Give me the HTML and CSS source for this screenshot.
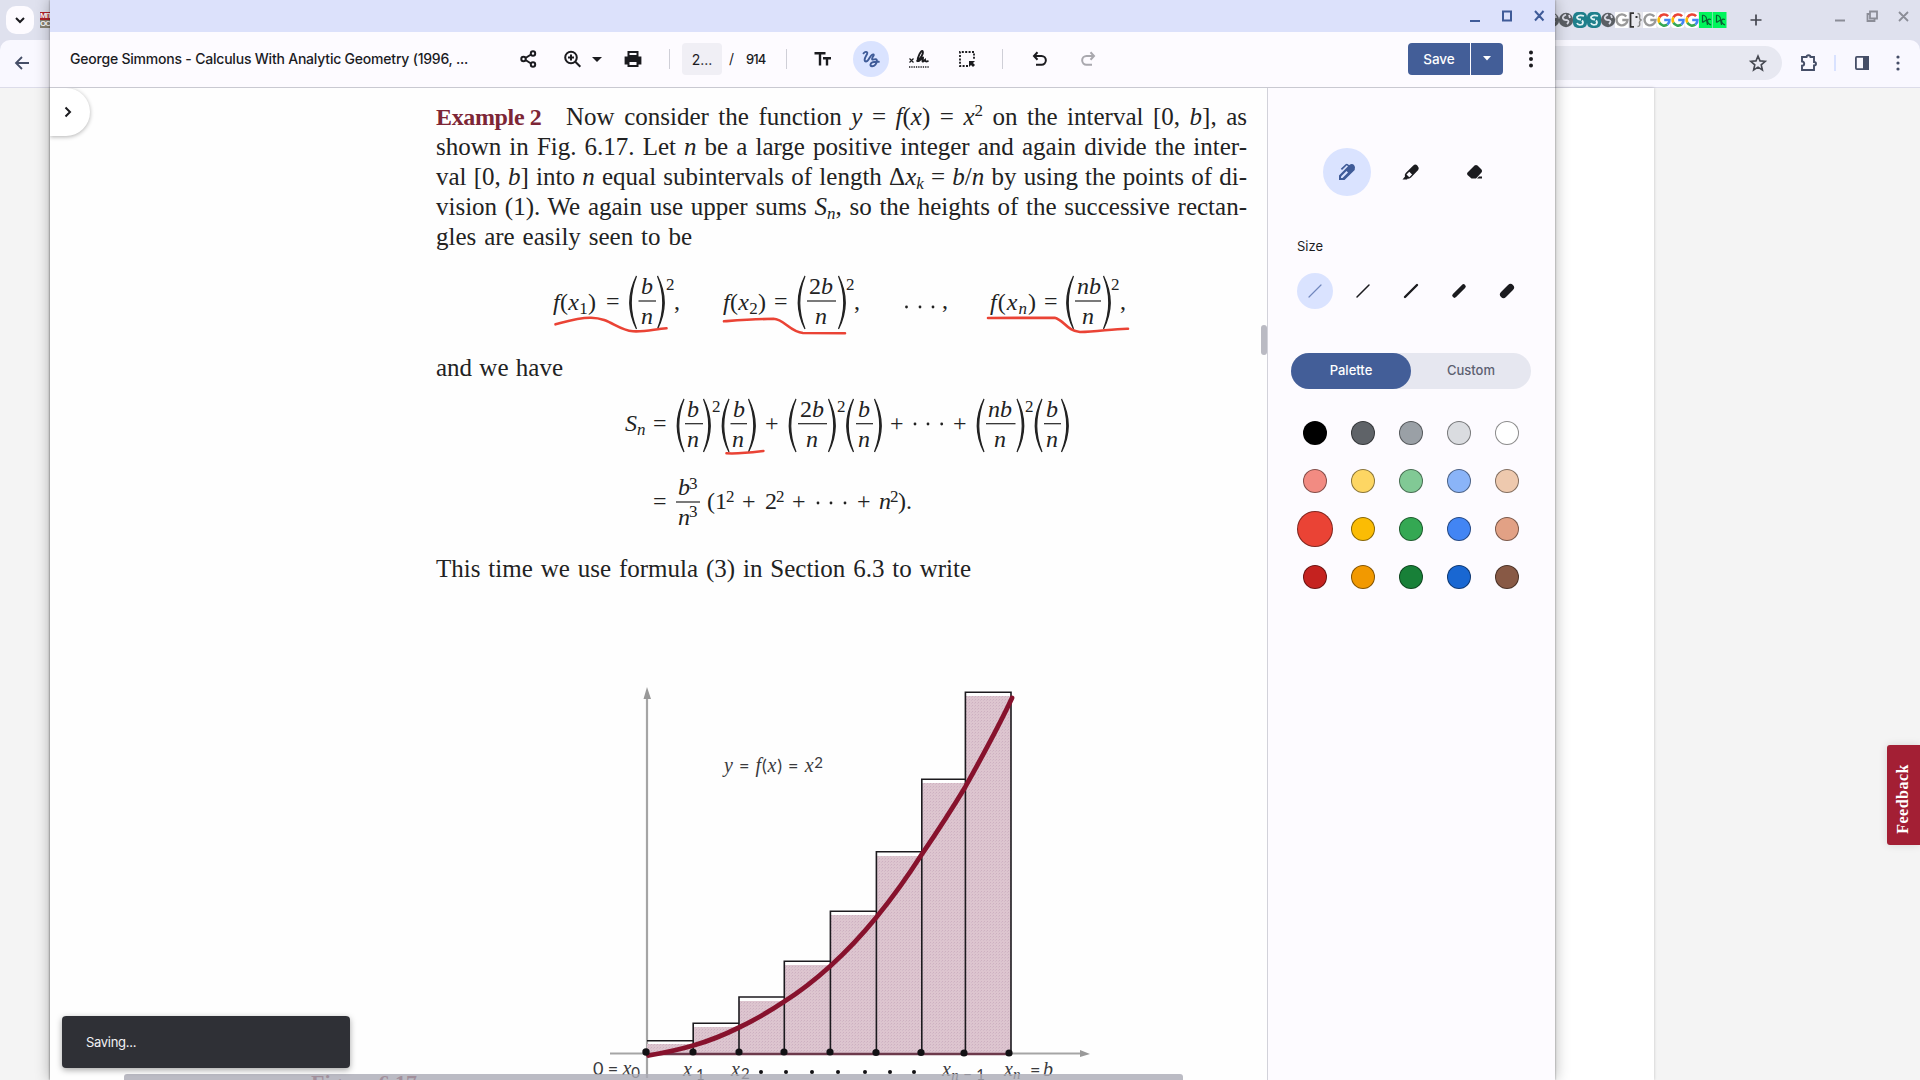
FILE: index.html
```html
<!DOCTYPE html>
<html lang="en">
<head>
<meta charset="utf-8">
<title>George Simmons - Calculus With Analytic Geometry</title>
<link rel="stylesheet" href="styles.css">
</head>
<body>
<div class="browser">
  <header class="tabstrip">
    <div class="tabsearch"><svg width="12" height="12" viewBox="0 0 12 12" fill="none" stroke="#1b1b1f" stroke-width="2"><path d="M2 4l4 4 4-4"/></svg></div>
    <div class="mit"><b>MIT</b><b>OCW</b></div>
    <svg class="favicons" width="176" height="16" viewBox="0 0 176 16">
      <defs>
        <g id="globe"><circle cx="7" cy="8" r="7.200" fill="#5b5f64"/><path d="M7 2.500q-4 2-3 4t4 1.500q3 1 0 4M10 3l1 3" fill="none" stroke="#d9dae4" stroke-width="1.800"/></g>
        <g id="teal"><rect width="14" height="16" rx="5" fill="#1f7f8b"/><path d="M11 4q-5-1.500-7 1 0 2.500 4 2.500M4 11q1 2.500 5 1.500 2-2 0-4" fill="none" stroke="#e1f3f4" stroke-width="1.800"/></g>
        <g id="greyg"><rect width="13.500" height="16" fill="#fff"/><path d="M11.300 4.400A5.500 5.500 0 1 0 12.500 8H7.300" fill="none" stroke="#999" stroke-width="2.400"/></g>
        <g id="g" fill="none" stroke-width="2.600"><rect width="13.500" height="16" rx="3" fill="#fff"/><path d="M11.100 4.200A5.400 5.400 0 0 0 2.400 5.300" stroke="#ea4335"/><path d="M2.400 5.300a5.400 5.400 0 0 0 0 5.400" stroke="#fbbc05"/><path d="M2.400 10.700a5.400 5.400 0 0 0 8 1.800" stroke="#34a853"/><path d="M10.400 12.500A5.400 5.400 0 0 0 12.400 8H7.200" stroke="#4285f4"/></g>
        <g id="green"><rect width="13.500" height="16" fill="#00f55b"/><path d="M3.500 3v7.500M3.500 3Q8 4 7.500 8L3.500 10.500M7.500 8l1 5M12 7.500q-3.500-1-3.500 1.500t3.500 4" fill="none" stroke="#0b5c33" stroke-width="1.200"/></g>
      </defs>
      <use href="#globe" x="-6"/><use href="#globe" x="8"/><use href="#teal" x="22"/><use href="#teal" x="36"/><use href="#globe" x="50"/><use href="#greyg" x="64"/>
      <rect x="78" width="13.500" height="16" fill="#e9e9ee"/><path d="M83 1.200h-3.500v13.600h3.500" fill="none" stroke="#333" stroke-width="1.800"/><rect x="84.500" y="4" width="2" height="2" fill="#333"/><path d="M86.500 1.500q3 0 2 4 0 2 2 2.500-2 .5-2 2.500 1 4-2 4" fill="none" stroke="#888" stroke-width="1.500"/>
      <use href="#greyg" x="92"/><use href="#g" x="106"/><use href="#g" x="120"/><use href="#g" x="134"/><use href="#green" x="148"/><use href="#green" x="162"/>
    </svg>
    <svg class="newtab" width="12" height="12" viewBox="0 0 12 12" stroke="#44464f" stroke-width="1.700"><path d="M6 .5v11M.5 6h11"/></svg>
    <svg class="bgcontrols" width="76" height="14" viewBox="0 0 76 14" fill="none" stroke="#8b8d97" stroke-width="1.800"><path d="M0 11.500h10M35 2.500h7v7h-7zM35 5h-2.500v7h7V9.500M64 3l9 9M73 3l-9 9"/></svg>
  </header>
  <div class="navbar">
    <svg class="back" width="16" height="16" viewBox="0 0 16 16" fill="none" stroke="#454e67" stroke-width="1.800"><path d="M15 8H3M8 2L2 8l6 6"/></svg>
    <div class="omnibox"><svg width="18" height="18" viewBox="0 0 18 18" fill="none" stroke="#454851" stroke-width="1.600"><path d="M9 2l2 4.900 5.200.4-4 3.500 1.200 5.200L9 13.200 4.600 16l1.200-5.200-4-3.500L7 6.900z"/></svg></div>
    <svg class="puzzle" width="18" height="18" viewBox="0 0 18 18" fill="none" stroke="#454e67" stroke-width="1.900"><path d="M2 3h4.500q0-1.800 2-1.800t2 1.800H14v5q2 0 2 1.700T14 11.400V16H2v-4.300q2.200 0 2.200-2T2 7.500z"/></svg>
    <i class="navline"></i>
    <svg class="sidepanel" width="16" height="16" viewBox="0 0 16 16"><rect x="1.900" y="1.900" width="12.200" height="12.200" rx="1" fill="none" stroke="#454e67" stroke-width="1.800"/><path d="M9 1h6v14H9z" fill="#454e67"/></svg>
    <svg class="navmore" width="4" height="16" viewBox="0 0 4 16" fill="#454e67"><circle cx="2" cy="2" r="1.600"/><circle cx="2" cy="8" r="1.600"/><circle cx="2" cy="14" r="1.600"/></svg>
  </div>
  <div class="site"><div class="sitepage"></div><div class="feedback"><span>Feedback</span></div></div>
</div>

<main class="window">
  <div class="titlebar">
    <svg width="76" height="14" viewBox="0 0 76 14" fill="none" stroke="#3f5b98" stroke-width="2"><path d="M0 12h10M33 2.500h8v9h-8zM65 2l8.500 9.500M73.500 2L65 11.500"/></svg>
  </div>
  <div class="toolbar">
    <div class="name">George Simmons - Calculus With Analytic Geometry (1996, ...</div>
    <svg class="tools" width="140" height="36" viewBox="510 41 140 36" fill="none" stroke="#1b1b1f" stroke-width="2">
      <circle cx="533" cy="53.500" r="2.200"/><circle cx="533" cy="64.500" r="2.200"/><circle cx="523.500" cy="59" r="2.200"/><path d="M525.500 58l5.500-3.500M525.500 60l5.500 3.500"/>
      <circle cx="571" cy="57.500" r="5.800"/><path d="M575.300 61.800l5 5M568 57.500h6M571 54.500v6" /><path d="M592 57h10l-5 5z" fill="#1b1b1f" stroke="none"/>
      <rect x="628.500" y="52" width="9" height="4"/><path d="M625.600 57.500h14.800v6h-14.800z" fill="#1b1b1f"/><path d="M628.500 61h9v5h-9z" fill="#fdfbff"/>
    </svg>
    <i class="rule r1"></i>
    <div class="pageno">2...</div><div class="slash">/</div><div class="total">914</div>
    <i class="rule r2"></i>
    <svg class="text-tool" width="18" height="16" viewBox="0 0 18 16" fill="none" stroke="#1b1b1f" stroke-width="2.400"><path d="M.5 2.200h11M6 2v12.500M9 7.200h8M13 7v7.500"/></svg>
    <div class="draw"><svg width="18" height="18" viewBox="0 0 18 18" fill="none" stroke="#3f5b98" stroke-width="1.900" stroke-linecap="round"><path d="M1.500 3.300C3 1.800 5 1.300 5.300 2.800C5.600 4.500 2.300 7.500 2.600 10C2.900 12 5 12 6.600 9.500C8.200 7 9.500 4 11.300 4.400C13.200 5 9 8 10 9.300C11.500 10 14.700 8 14.900 10.500C15 13.500 12.500 16.300 10 16.200C7.800 16 8 13.300 10.300 12.300C12.500 11.400 14.500 11.600 16.800 11.800"/></svg></div>
    <svg class="sign" width="20" height="20" viewBox="0 0 20 20" fill="none" stroke="#1b1b1f"><path d="M.5 9.500l4 4M4.500 9.500l-4 4" stroke-width="1.200"/><path d="M7.500 12.500C12 9.500 15 4 13.500 2C12 .8 8.500 8.500 8.700 11.500C9.500 14 13 8 14 8.500C14.500 9.500 12.500 12.500 14 12.500L16 11C16 13 17.500 12.500 19.500 12" stroke-width="1.900"/><path d="M0 18h20" stroke-width="1.500" stroke-dasharray="1.300 1"/></svg>
    <svg class="marquee" width="16" height="16" viewBox="0 0 16 16" fill="none" stroke="#1b1b1f" stroke-width="1.800"><path d="M9 15H1V1h14v8" stroke-dasharray="2 1.400"/><path d="M10 10h6l-2 2 2 2-2 2-2-2-2 2z" fill="#1b1b1f" stroke="none"/></svg>
    <i class="rule r3"></i>
    <svg class="undo" width="16" height="16" viewBox="0 0 16 16" fill="none" stroke="#1b1b1f" stroke-width="2"><path d="M5.500 1.200L2 5l3.500 3.800M2 5h7.500a4.300 4.300 0 0 1 0 8.700H4"/></svg>
    <svg class="redo" width="16" height="16" viewBox="0 0 16 16" fill="none" stroke="#a9a8ae" stroke-width="2"><path d="M10.500 1.200L14 5l-3.500 3.800M14 5H6.500a4.300 4.300 0 0 0 0 8.700H12"/></svg>
    <div class="save">Save</div><div class="savemenu"><svg width="8" height="5" viewBox="0 0 8 5"><path d="M0 0h8L4 4.500z" fill="#fff"/></svg></div>
    <svg class="more" width="4" height="18" viewBox="0 0 4 18" fill="#1b1b1f"><circle cx="2" cy="2.500" r="2"/><circle cx="2" cy="9" r="2"/><circle cx="2" cy="15.500" r="2"/></svg>
  </div>
  <div class="body">
    <section class="viewer">
      <article class="page">
        <div class="ln"><b class="ex">Example 2</b>Now consider the function <i>y</i> = <i>f</i>(<i>x</i>) = <i>x</i><sup>2</sup> on the interval [0, <i>b</i>], as</div>
        <div class="ln">shown in Fig. 6.17. Let <i>n</i> be a large positive integer and again divide the inter-</div>
        <div class="ln">val [0, <i>b</i>] into <i>n</i> equal subintervals of length Δ<i>x<sub>k</sub></i> = <i>b</i>/<i>n</i> by using the points of di-</div>
        <div class="ln">vision (1). We again use upper sums <i>S<sub>n</sub></i>, so the heights of the successive rectan-</div>
        <div class="ln l5">gles are easily seen to be</div>
        <svg class="math" width="811" height="101" viewBox="436 251 811 101">
          <defs>
            <path id="lp" d="M7.500 0Q-6 26.500 7.500 53Q-3 26.500 7.500 0z"/>
            <path id="rp" d="M.5 0Q14 26.500 .5 53Q11 26.500 .5 0z"/>
          </defs>
          <text x="553" y="310" textLength="43"><tspan class="it">f</tspan>(<tspan class="it">x</tspan><tspan class="sm" dy="4">1</tspan><tspan dy="-4">)</tspan></text><text x="606" y="309">=</text>
          <use href="#lp" x="629" y="276"/><text class="it" x="641" y="294">b</text><path d="M638.500 301h17.500"/><text class="it" x="641" y="324">n</text><use href="#rp" x="657" y="276"/><text class="sm" x="666" y="290">2</text><text x="674" y="309">,</text>
          <text x="723" y="310" textLength="43"><tspan class="it">f</tspan>(<tspan class="it">x</tspan><tspan class="sm" dy="4">2</tspan><tspan dy="-4">)</tspan></text><text x="774" y="309">=</text>
          <use href="#lp" x="797.500" y="276"/><text x="809" y="294">2<tspan class="it">b</tspan></text><path d="M807 301h29"/><text class="it" x="815" y="324">n</text><use href="#rp" x="838" y="276"/><text class="sm" x="846" y="290">2</text><text x="854" y="309">,</text>
          <g class="dot"><circle cx="906.500" cy="307" r="1.400"/><circle cx="920" cy="307" r="1.400"/><circle cx="933" cy="307" r="1.400"/></g><text x="942" y="308">,</text>
          <text x="990" y="310" textLength="46"><tspan class="it">f</tspan>(<tspan class="it">x</tspan><tspan class="sm it" dy="4">n</tspan><tspan dy="-4">)</tspan></text><text x="1044" y="309">=</text>
          <use href="#lp" x="1066" y="276"/><text class="it" x="1077" y="294">nb</text><path d="M1075 301h26"/><text class="it" x="1082" y="324">n</text><use href="#rp" x="1103" y="276"/><text class="sm" x="1111" y="290">2</text><text x="1120" y="309">,</text>
          <g class="ink"><path d="M555.500 324.300C568 321 579 317.500 591 317.800C610 318 617 330 633 331.300C646 332 655 329 666.500 328.300"/><path d="M724 321.300C742 320 755 319 773.500 318.800C784 319 790 332 803 333L845 333.300"/><path d="M988 318L1054.700 317.700C1064 320 1067 331 1080 332C1098 332 1112 328.500 1128 328.700"/></g>
        </svg>
        <div class="ln l6">and we have</div>
        <svg class="math" width="811" height="171" viewBox="436 382 811 171">
          <text class="it" x="625" y="431">S<tspan class="sm" dy="4">n</tspan></text><text x="653" y="431">=</text>
          <use href="#lp" x="676.500" y="399"/><text class="it" x="687" y="417">b</text><path d="M685 423.700h18"/><text class="it" x="687" y="447">n</text><use href="#rp" x="703" y="399"/><text class="sm" x="712" y="412">2</text>
          <use href="#lp" x="721.500" y="399"/><text class="it" x="733" y="417">b</text><path d="M730.500 423.700h16.500"/><text class="it" x="732" y="447">n</text><use href="#rp" x="748" y="399"/><text x="765" y="431">+</text>
          <use href="#lp" x="788.500" y="399"/><text x="800" y="417">2<tspan class="it">b</tspan></text><path d="M798 423.700h29"/><text class="it" x="806" y="447">n</text><use href="#rp" x="828" y="399"/><text class="sm" x="837" y="412">2</text>
          <use href="#lp" x="846" y="399"/><text class="it" x="858" y="417">b</text><path d="M856 423.700h17"/><text class="it" x="858" y="447">n</text><use href="#rp" x="874" y="399"/><text x="890" y="431">+</text>
          <g class="dot"><circle cx="915" cy="424" r="1.400"/><circle cx="928" cy="424" r="1.400"/><circle cx="941.700" cy="424" r="1.400"/></g><text x="953" y="431">+</text>
          <use href="#lp" x="976.500" y="399"/><text class="it" x="988" y="417">nb</text><path d="M986 423.700h29.500"/><text class="it" x="994" y="447">n</text><use href="#rp" x="1016.500" y="399"/><text class="sm" x="1025" y="412">2</text>
          <use href="#lp" x="1034.500" y="399"/><text class="it" x="1046" y="417">b</text><path d="M1044 423.700h17"/><text class="it" x="1046" y="447">n</text><use href="#rp" x="1061" y="399"/>
          <text x="653" y="509">=</text><text class="it" x="678" y="495">b</text><text class="sm" x="689" y="489">3</text><path d="M676 502h24"/><text class="it" x="678" y="525">n</text><text class="sm" x="689" y="517">3</text>
          <text x="707" y="509">(1</text><text class="sm" x="726" y="502">2</text><text x="742" y="509">+</text><text x="765" y="509">2</text><text class="sm" x="776" y="502">2</text><text x="792" y="509">+</text>
          <g class="dot"><circle cx="818" cy="503" r="1.400"/><circle cx="831" cy="503" r="1.400"/><circle cx="845" cy="503" r="1.400"/></g><text x="857" y="509">+</text><text class="it" x="879" y="509">n</text><text class="sm" x="890" y="502">2</text><text x="898" y="509">).</text>
          <path class="ink" d="M726.500 453.300C740 454 751 452.500 763.400 451"/>
        </svg>
        <div class="ln l7">This time we use formula (3) in Section 6.3 to write</div>
        <svg class="figure" width="811" height="410" viewBox="436 670 811 410">
          <defs>
            <pattern id="halftone" width="3" height="3" patternUnits="userSpaceOnUse"><rect width="3" height="3" fill="#ddc5cf"/><rect width="1" height="1" fill="#cdb0c0"/><rect x="2" y="1" width="1" height="1" fill="#d3bac8"/></pattern>
          </defs>
          <path d="M647 696V1078" stroke="#a5a5a5" stroke-width="2.200"/><path d="M643.500 699l3.500-12 4 12z" fill="#999"/>
          <path d="M610 1053.500H1084" stroke="#a5a5a5" stroke-width="2.200"/><path d="M1080 1050l10 4-10 3z" fill="#999"/>
          <path d="M647 1044h46v-17h46v-26h45.500v-36h46v-50h46v-59h45.500v-73H965.500v-87H1011V1053H647z" fill="url(#halftone)"/>
          <path d="M647 1054H1011" stroke="#6d3a4c" stroke-width="2.500"/>
          <path d="M647 1040.700h46.200V1053M693.200 1040V1023.300H739V1053M739 1024V997h45.300V1053M784.300 998V961.300h46.100V1053M830.400 962V911.300h46V1053M876.400 912V851.700h45.400V1053M921.800 852V779.300h43.600V1053M965.400 780V692.300H1011V1053" fill="none" stroke="#1c1a1e" stroke-width="1.600"/>
          <path d="M648.600 1055.500C663 1053 678 1050 693.200 1045.500C709 1041 724 1035 739 1027.500C755 1020 770 1011 784.300 1001.500C801 991 816 979 830.400 966C847 951 862 935 876.400 917.300C893 897 908 876 921.800 854.300C937 832 952 809 965.400 786.700C982 757 998 728 1012 698" fill="none" stroke="#87122d" stroke-width="4.800" stroke-linecap="round"/>
          <g fill="#121114"><circle cx="646" cy="1052" r="3.700"/><circle cx="693" cy="1052" r="3.600"/><circle cx="739" cy="1052" r="3.600"/><circle cx="784" cy="1052" r="3.600"/><circle cx="830" cy="1052" r="3.600"/><circle cx="876" cy="1052.500" r="3.600"/><circle cx="921" cy="1052.500" r="3.600"/><circle cx="964" cy="1053" r="3.600"/><circle cx="1009" cy="1053" r="3.600"/>
          <circle cx="761" cy="1072" r="2"/><circle cx="786" cy="1072" r="2"/><circle cx="812" cy="1072" r="2"/><circle cx="838" cy="1072" r="2"/><circle cx="865" cy="1072" r="2"/><circle cx="890" cy="1072" r="2"/><circle cx="914" cy="1072" r="2"/></g>
          <g class="lab"><text x="724" y="772" textLength="99"><tspan class="x">y</tspan> = <tspan class="x">f</tspan>(<tspan class="x">x</tspan>) = <tspan class="x">x</tspan><tspan class="s" dy="-4">2</tspan></text>
          <text x="593" y="1075" textLength="47">0 = <tspan class="x">x</tspan><tspan class="s" dy="3">0</tspan></text><text x="683" y="1076"><tspan class="x">x</tspan><tspan class="s" dx="4" dy="4">1</tspan></text><text x="731" y="1076"><tspan class="x">x</tspan><tspan class="s" dx="1" dy="3">2</tspan></text><text x="942" y="1076" textLength="43"><tspan class="x">x</tspan><tspan class="s x" dy="4">n</tspan><tspan class="s"> − 1</tspan></text><text x="1004" y="1076"><tspan class="x">x</tspan><tspan class="s x" dy="3">n</tspan></text><text x="1030" y="1076" textLength="23">= <tspan class="x">b</tspan></text></g>
          <text class="caption" x="311" y="1090">Figure 6.17</text>
        </svg>
      </article>
      <div class="expand"><svg width="10" height="12" viewBox="0 0 10 12" fill="none" stroke="#1b1b1f" stroke-width="2"><path d="M2.500 1.500L7 6l-4.500 4.500"/></svg></div>
      <i class="vthumb"></i><i class="hthumb"></i>
      <div class="toast">Saving...</div>
    </section>
    <aside class="panel">
      <div class="pens">
        <div class="on"><svg width="16" height="16" viewBox="0 0 16 16"><path d="M0 16v-4.500L9 2.300 7.800 1.200 3 6 1.800 4.800 6.600.2Q7.800-.5 9 .3l1 1Q13-1.300 15 1t.7 5L5.500 16z" fill="#3f5b98"/><path d="M2 14v-1.500L7.500 7 9 8.500 3.500 14z" fill="#dae3ff"/></svg></div>
        <div><svg width="18" height="16" viewBox="0 0 18 16"><path d="M.5 15.500l2.500-3q-.8-2 .7-3.500l7.600-7.500q2-1.800 4 0t.9 4.600L9 13.500q-1.500 1.500-3.200 1L5 15.500z" fill="#1b1b1f"/><path d="M4.500 10.500l2.800-2.800 2.800 2.800-2.800 2.800z" fill="#fdfbff"/></svg></div>
        <div><svg width="18" height="16" viewBox="0 0 18 16"><path d="M1.500 8.500L8.500 1.500q1.500-1.200 3 0L15.500 5.500q1.200 1.500 0 3L10 14.500H5.500L1.500 11q-1-1.300 0-2.500zM11 14.500l2-2h3v2z" fill="#1b1b1f"/></svg></div>
      </div>
      <div class="sizelabel">Size</div>
      <div class="sizes">
        <div class="on"><svg><path d="M3 15L15 3" stroke-width="1.200"/></svg></div><div><svg><path d="M3 15L15 3" stroke-width="1.500"/></svg></div><div><svg><path d="M3 15L15 3" stroke-width="2.400"/></svg></div><div><svg><path d="M4.500 13.500l9-9" stroke-width="4.500"/></svg></div><div><svg><path d="M5.500 12.500l7-7" stroke-width="7"/></svg></div>
      </div>
      <div class="toggle"><div class="on">Palette</div><div>Custom</div></div>
      <div class="swatches">
        <i class="k1"></i><i class="k2"></i><i class="k3"></i><i class="k4"></i><i class="k5"></i>
        <i class="l1"></i><i class="l2"></i><i class="l3"></i><i class="l4"></i><i class="l5c"></i>
        <i class="m1 sel"></i><i class="m2"></i><i class="m3"></i><i class="m4"></i><i class="m5"></i>
        <i class="d1"></i><i class="d2"></i><i class="d3"></i><i class="d4"></i><i class="d5"></i>
      </div>
    </aside>
  </div>
</main>
</body>
</html>
```
FILE: styles.css
```css
*{box-sizing:border-box}
body{margin:0;width:1920px;height:1080px;overflow:hidden;position:relative;font-family:Inter,Roboto,sans-serif;color:#1b1b1f}
svg{display:block;flex:none;overflow:visible}
.browser{height:1080px;display:flex;flex-direction:column;background:#dfe0ee}
.tabstrip{height:40px;flex:none;display:flex;align-items:flex-start;background:#dfe1ee}
.tabsearch{width:28px;height:28px;margin:6px 0 0 6px;border-radius:10px;background:#fdfbff;display:flex;align-items:center;justify-content:center}
.mit{width:24px;height:16px;margin:12px 0 0 6px;display:flex;flex-direction:column;overflow:hidden;color:#fff;font:bold 8px/8px "Liberation Sans",sans-serif;letter-spacing:-1px}
.mit b{background:#b1222a}
.mit b+b{background:#8a8474}
.favicons{margin:12px 0 0 1487px}
.newtab{margin:14px 0 0 23px}
.bgcontrols{margin:9px 0 0 73px}
.navbar{height:48px;flex:none;display:flex;align-items:center;background:#f9f8ff;border-bottom:1px solid #dcdce9;border-radius:10px 10px 0 0;padding-bottom:1px}
.back{margin-left:14px}
.omnibox{width:1700px;height:34px;margin-left:52px;border-radius:17px;background:#e7e8f1;display:flex;align-items:center;justify-content:flex-end;padding-right:15px}
.puzzle{margin-left:18px}
.navline{width:2px;height:16px;margin-left:16px;background:#d9e2ff}
.sidepanel{margin-left:18px}
.navmore{margin-left:26px}
.site{flex:1;background:#f4f4f4;display:flex;justify-content:space-between}
.sitepage{width:1604px;margin-left:50px;background:#fff;box-shadow:0 0 3px rgba(0,0,0,.2)}
.feedback{width:33px;height:100px;margin-top:657px;background:#a31f34;border-radius:3px 0 0 3px;display:flex;align-items:center;justify-content:center;color:#fff;font:bold 16px "Liberation Serif",serif;box-shadow:0 0 8px rgba(0,0,0,.12)}
.feedback span{writing-mode:vertical-rl;transform:rotate(180deg);letter-spacing:.5px;margin-top:8px;margin-right:2px}
.window{position:absolute;left:50px;top:0;width:1505px;height:1080px;background:#fdfbff;display:flex;flex-direction:column;box-shadow:0 0 14px rgba(0,0,0,.3),0 0 2px rgba(0,0,0,.4)}
.titlebar{height:32px;background:#dce1fb;flex:none;display:flex;justify-content:flex-end;padding:9px 9px 0 0}
.toolbar{height:56px;flex:none;display:flex;align-items:center;border-bottom:1px solid #c9c9d1;font-size:14px;padding-bottom:2px}
.name{width:440px;padding-left:20px;font-size:14px;font-weight:500;white-space:nowrap;letter-spacing:-.21px}
.tools{margin-left:20px}
.rule{width:1px;height:20px;background:#cfcfd7}
.r1{margin-left:19px}.r2{margin-left:20px}.r3{margin-left:27px}
.pageno{width:40px;height:32px;margin-left:12px;border-radius:4px;background:#f0eff5;display:flex;align-items:center;justify-content:center;padding-top:2px}
.slash{width:24px;padding-left:7px}.total{width:20px;font-size:13px;font-weight:500;letter-spacing:-.9px}
.text-tool{margin-left:27px}
.draw{width:36px;height:36px;border-radius:50%;margin-left:21px;background:#dae3ff;display:flex;align-items:center;justify-content:center}
.sign{margin-left:20px}.marquee{margin-left:30px}
.undo{margin-left:29px}.redo{margin-left:32px}
.save{width:62px;height:32px;margin-left:312px;background:#435e98;color:#fff;border-radius:4px 0 0 4px;display:flex;align-items:center;justify-content:center;font-weight:500;font-size:13.500px}
.savemenu{width:32px;height:32px;margin-left:1px;background:#435e98;border-radius:0 4px 4px 0;display:flex;align-items:center;justify-content:center}
.more{margin-left:26px}
.body{flex:1;display:flex;min-height:0}
.viewer{width:1217px;position:relative;overflow:hidden;background:#fefefe}
.page{width:811px;margin:13px 0 0 386px;font:25px/32px "Liberation Serif",serif;color:#222}
.ln{height:30px;line-height:32px;text-align:justify;text-align-last:justify;white-space:nowrap}
.ln sup,.ln sub{font-size:17px;line-height:0}
.ln sub{vertical-align:-4px}
.ex{color:#7d2636;display:inline-block;width:130px;line-height:30px;text-align:left;text-align-last:left;font-size:24px;letter-spacing:-.35px}
.l5{width:256px}.l6{width:127px}.l7{width:535px}
.math{font:24px "Liberation Serif",serif;fill:#222}
.math path{stroke:#222;stroke-width:1.200}
.it{font-style:italic}.math .sm{font-size:17px}
.math .ink,.math .ink path{stroke:#ea4335;stroke-width:2.600;fill:none;stroke-linecap:round}
.figure{margin-top:87px}
.lab{font:18px Lato,sans-serif;fill:#3a3a3d}
.lab .x{font-family:"Liberation Serif",serif;font-style:italic;font-size:20px}
.lab .s{font-size:15px}
.caption{font:bold 22px "Liberation Serif",serif;fill:#7d2636}
.expand{position:absolute;left:0;top:0;width:40px;height:48px;background:#fff;border-radius:0 24px 24px 0;box-shadow:0 1px 4px rgba(0,0,0,.3);display:flex;align-items:center;padding-left:13px}
.vthumb{position:absolute;right:0;top:237px;width:6px;height:30px;border-radius:3px;background:#babac3}
.hthumb{position:absolute;left:74px;bottom:0;width:1059px;height:6px;border-radius:3px 3px 0 0;background:rgba(170,170,181,.8)}
.toast{position:absolute;left:12px;bottom:12px;width:288px;height:52px;border-radius:4px;background:#2f3036;color:#f2f0f4;font-size:13px;letter-spacing:-.3px;display:flex;align-items:center;padding:0 0 1px 24px;box-shadow:0 2px 6px rgba(0,0,0,.35)}
.panel{width:288px;border-left:1px solid #d2d2da;padding:60px 24px 0 23px;display:flex;flex-direction:column}
.pens{display:flex;gap:16px;padding-left:32px}
.pens div{width:48px;height:48px;border-radius:50%;display:flex;align-items:center;justify-content:center}
.pens .on{background:#dae3ff}
.sizelabel{margin:40px 0 0 6px;height:20px;line-height:20px;font-size:13px}
.sizes{display:flex;gap:12px;margin:17px 0 0 6px}
.sizes div{width:36px;height:36px;border-radius:50%;display:flex;align-items:center;justify-content:center}
.sizes svg{width:18px;height:18px;stroke:#1b1b1f;stroke-linecap:round}
.sizes .on{background:#dae3ff}.sizes .on svg{stroke:#7187bd}
.toggle{width:240px;height:36px;margin-top:44px;border-radius:18px;background:#e6e7f0;display:flex;font-size:13px;line-height:35px;font-weight:500;color:#5c6070}
.toggle div{width:120px;border-radius:18px;text-align:center}
.toggle .on{background:#435e98;color:#fff}
.swatches{display:grid;grid-template-columns:repeat(5,48px);grid-auto-rows:48px;place-items:center;margin-top:20px}
.swatches i{width:24px;height:24px;border-radius:50%;border:1px solid rgba(0,0,0,.45)}
.swatches .sel{width:36px;height:36px}
.k1{background:#000}.k2{background:#5f6368}.k3{background:#9aa0a6}.k4{background:#dadce0}.k5{background:#fff}
.l1{background:#f28b82}.l2{background:#fdd663}.l3{background:#81c995}.l4{background:#8ab4f8}.l5c{background:#eec9ae}
.m1{background:#ea4335}.m2{background:#fbbc04}.m3{background:#34a853}.m4{background:#4285f4}.m5{background:#e2a185}
.d1{background:#c5221f}.d2{background:#f29900}.d3{background:#188038}.d4{background:#1967d2}.d5{background:#885945}
```
